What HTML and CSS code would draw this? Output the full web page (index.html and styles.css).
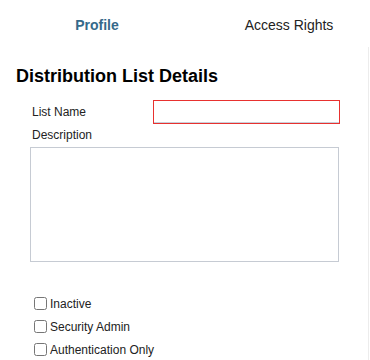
FILE: index.html
```html
<!DOCTYPE html>
<html lang="en">
<head>
    <meta charset="UTF-8">
    <meta name="viewport" content="width=device-width, initial-scale=1.0">
    <title>Distribution List</title>
    <link rel="stylesheet" href="styles.css">
</head>
<body>
    <div class="tabs">
        <div class="tab active">Profile</div>
        <div class="tab">Access Rights</div>
    </div>

    <div class="panel">
        <h1>Distribution List Details</h1>

        <div class="form">
            <div class="row">
                <label for="listName">List Name</label>
                <input type="text" id="listName" class="invalid">
            </div>

            <label for="description" class="desc-label">Description</label>
            <textarea id="description"></textarea>

            <div class="checks">
                <label class="check"><input type="checkbox"> Inactive</label>
                <label class="check"><input type="checkbox"> Security Admin</label>
                <label class="check"><input type="checkbox"> Authentication Only</label>
            </div>
        </div>
    </div>
</body>
</html>
```

FILE: styles.css
```css
/* General Styles */
body {
    font-family: 'Liberation Sans', Arial, sans-serif;
    background: white;
    color: #222;
    margin: 0;
    padding: 0;
    overflow: hidden;
}

.tabs {
    display: flex;
    height: 47px;
    padding-left: 1px;
}

.tab {
    width: 192px;
    flex-shrink: 0;
    font-size: 14px;
    line-height: 16px;
    padding-top: 17px;
    text-align: center;
    color: #222;
}

.tab.active {
    font-weight: bold;
    color: #35698a;
}

.panel {
    width: 369px;
    min-height: 320px;
    border-right: 1px solid #ececec;
    box-sizing: border-box;
    padding-top: 19px;
}

h1 {
    font-size: 18px;
    line-height: 20px;
    margin: 0 0 14px 16px;
    color: #000;
}

.form {
    padding-left: 30px;
    width: 310px;
    font-size: 12px;
}

.row {
    display: flex;
    align-items: center;
    height: 24px;
}

.row label {
    width: 121px;
    padding-left: 2px;
    line-height: 14px;
}

.row input {
    width: 187px;
    height: 24px;
    box-sizing: border-box;
    border: 1px solid #ccd0d6;
    margin: 0;
    font-size: 12px;
}

.row input.invalid {
    border-color: #e8312f;
    box-shadow: inset 0 -1px 0 #c9d0da;
}

.desc-label {
    display: block;
    padding-left: 2px;
    line-height: 14px;
    margin-top: 4px;
}

textarea {
    display: block;
    width: 309px;
    height: 115px;
    box-sizing: border-box;
    margin-top: 5px;
    border: 1px solid #c6cbd3;
    resize: none;
    font-family: inherit;
}

.checks {
    margin-top: 30px;
}

.check {
    display: flex;
    align-items: center;
    height: 23px;
    line-height: 14px;
}

.check input {
    width: 13px;
    height: 13px;
    margin: 0 3px 0 4px;
}
```
